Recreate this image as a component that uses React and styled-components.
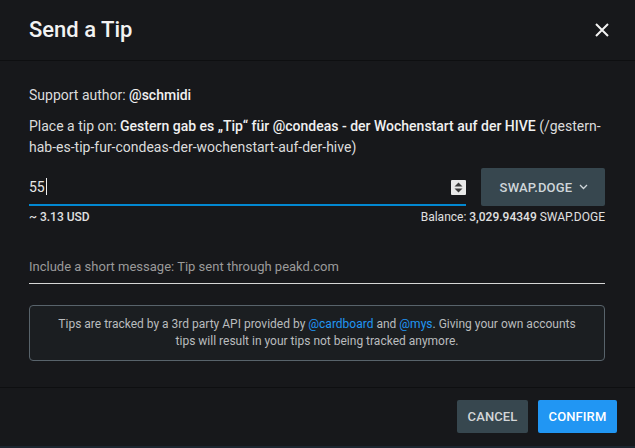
import React from "react";
import styled, { createGlobalStyle } from "styled-components";

const GlobalStyle = createGlobalStyle`
  html, body {
    margin: 0;
    padding: 0;
    background: #1c2630;
  }
  body {
    font-family: Roboto, "Noto Sans", "Liberation Sans", sans-serif;
    -webkit-font-smoothing: antialiased;
  }
  * { box-sizing: border-box; }
`;

const Dialog = styled.div`
  width: 635px;
  height: 446px;
  background: #17181b;
  color: #e3e3e3;
  display: flex;
  flex-direction: column;
`;

const Header = styled.div`
  height: 61px;
  display: flex;
  align-items: center;
  justify-content: space-between;
  padding: 0 22px 0 29px;
  border-bottom: 1px solid #0e0f11;
`;

const Title = styled.h2`
  margin: 0;
  font-size: 22px;
  font-weight: 500;
  color: #f2f2f2;
  line-height: 26px;
`;

const CloseButton = styled.button`
  width: 22px;
  height: 22px;
  padding: 0;
  border: 0;
  background: none;
  display: flex;
  align-items: center;
  justify-content: center;
  cursor: pointer;
`;

const Body = styled.div`
  flex: 1;
  padding: 24px 30px 0 29px;
  font-size: 14px;
  line-height: 21px;
`;

const Line = styled.p`
  margin: 0 0 ${(p) => p.gap || 0}px;
  color: #dcdcdc;
`;

const Strong = styled.span`
  font-weight: 500;
  color: #f0f0f0;
`;

const AmountRow = styled.div`
  margin-top: 10px;
  display: flex;
  gap: 15px;
  height: 38px;
`;

const AmountField = styled.div`
  flex: 1;
  display: flex;
  align-items: center;
  justify-content: space-between;
  border-bottom: 2px solid #0288d1;
  padding-top: 3px;
  font-size: 14px;
  color: #e8e8e8;
`;

const Caret = styled.span`
  display: inline-block;
  width: 1px;
  height: 17px;
  background: #f0f0f0;
  vertical-align: -3px;
  margin-left: 1px;
`;

const Spinner = styled.span`
  width: 15px;
  height: 15px;
  background: #e8e8e8;
  border-radius: 1px;
  display: flex;
  align-items: center;
  justify-content: center;
  margin-bottom: 1px;
`;

const TokenButton = styled.button`
  width: 124px;
  height: 38px;
  border: 0;
  border-radius: 2px;
  background: #37474f;
  color: #cfd6da;
  font-family: inherit;
  font-size: 13px;
  font-weight: 500;
  letter-spacing: 0.2px;
  display: flex;
  align-items: center;
  justify-content: center;
  gap: 7px;
  padding: 0 0 0 2px;
`;

const InfoRow = styled.div`
  display: flex;
  justify-content: space-between;
  margin-top: 2px;
  font-size: 12px;
  line-height: 18px;
  color: #e0e0e0;
`;

const Bold = styled.span`
  font-weight: 500;
`;

const MessageField = styled.div`
  margin-top: 22px;
  height: 36px;
  display: flex;
  align-items: center;
  border-bottom: 1px solid #d6d6d6;
  font-size: 13px;
  color: #9a9a9a;
  padding-top: 1px;
`;

const Notice = styled.div`
  margin-top: 21px;
  border: 1px solid #58636b;
  border-radius: 4px;
  background: #1b1e21;
  padding: 10px 28px;
  text-align: center;
  font-size: 12px;
  line-height: 17px;
  color: #b9bcbe;
`;

const Link = styled.a`
  color: #2196f3;
  text-decoration: none;
`;

const Footer = styled.div`
  height: 59px;
  border-top: 1px solid #0e0f11;
  display: flex;
  justify-content: flex-end;
  align-items: flex-start;
  gap: 10px;
  padding: 12px 18px 0 0;
`;

const ActionButton = styled.button`
  height: 33px;
  width: ${(p) => p.width}px;
  border: 0;
  border-radius: 2px;
  background: ${(p) => (p.primary ? "#2196f3" : "#37474f")};
  color: ${(p) => (p.primary ? "#ffffff" : "#d3d6d8")};
  font-family: inherit;
  font-size: 13px;
  font-weight: 500;
  letter-spacing: 0.1px;
  cursor: pointer;
`;

export default function App() {
  return (
    <>
      <GlobalStyle />
      <Dialog>
        <Header>
          <Title>Send a Tip</Title>
          <CloseButton aria-label="close">
            <svg width="14" height="14" viewBox="0 0 14 14">
              <path d="M1 1 L13 13 M13 1 L1 13" stroke="#f2f2f2" strokeWidth="2" />
            </svg>
          </CloseButton>
        </Header>
        <Body>
          <Line gap={10}>
            Support author: <Strong>@schmidi</Strong>
          </Line>
          <Line>
            Place a tip on:{" "}
            <Strong>
              Gestern gab es „Tip“ für @condeas - der Wochenstart auf der HIVE
            </Strong>{" "}
            (/gestern-hab-es-tip-fur-condeas-der-wochenstart-auf-der-hive)
          </Line>
          <AmountRow>
            <AmountField>
              <span>
                55
                <Caret />
              </span>
              <Spinner>
                <svg width="9" height="11" viewBox="0 0 9 11">
                  <path d="M4.5 0.5 L8.5 4.5 H0.5 Z M4.5 10.5 L8.5 6.5 H0.5 Z" fill="#3a3a3a" />
                </svg>
              </Spinner>
            </AmountField>
            <TokenButton>
              SWAP.DOGE
              <svg width="9" height="6" viewBox="0 0 9 6">
                <path d="M1 1 L4.5 4.5 L8 1" stroke="#cfd6da" strokeWidth="1.3" fill="none" />
              </svg>
            </TokenButton>
          </AmountRow>
          <InfoRow>
            <Bold>~ 3.13 USD</Bold>
            <span>
              Balance: <Bold>3,029.94349</Bold> SWAP.DOGE
            </span>
          </InfoRow>
          <MessageField>Include a short message: Tip sent through peakd.com</MessageField>
          <Notice>
            Tips are tracked by a 3rd party API provided by <Link>@cardboard</Link> and{" "}
            <Link>@mys</Link>. Giving your own accounts tips will result in your tips not
            being tracked anymore.
          </Notice>
        </Body>
        <Footer>
          <ActionButton width={71}>CANCEL</ActionButton>
          <ActionButton width={79} primary>
            CONFIRM
          </ActionButton>
        </Footer>
      </Dialog>
    </>
  );
}
